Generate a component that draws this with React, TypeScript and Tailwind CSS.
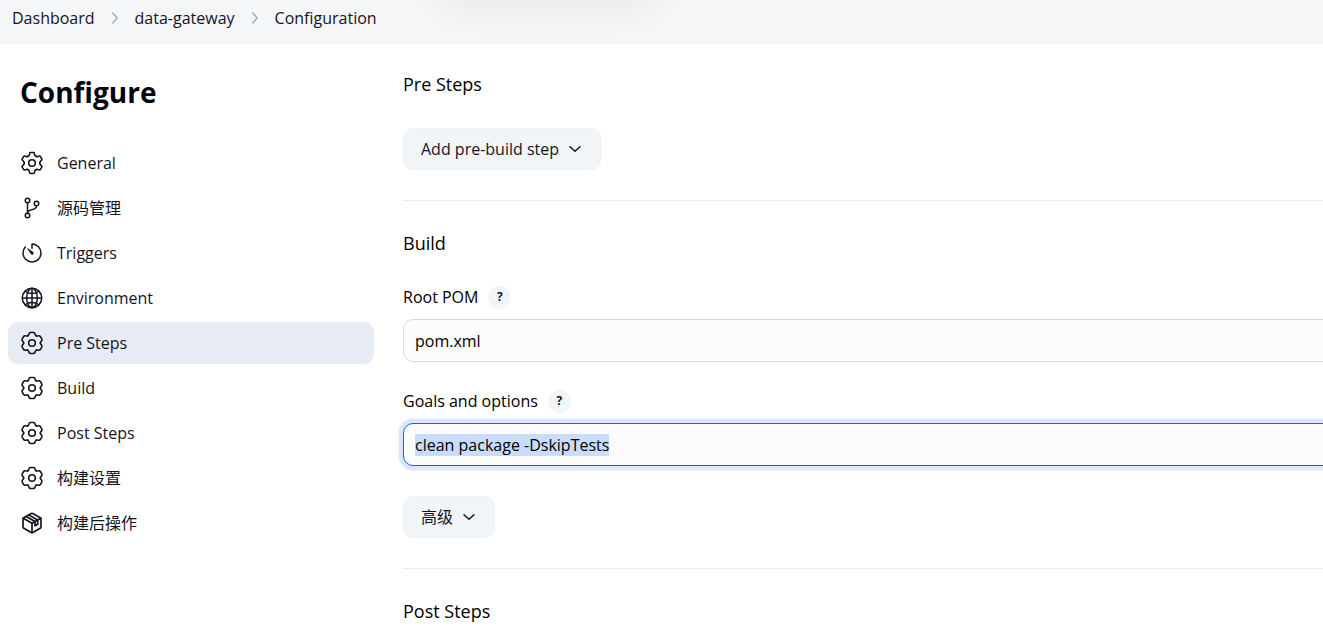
import React, { useEffect, useRef } from 'react';
import { IoGitBranchOutline, IoGlobeOutline, IoTimerOutline } from 'react-icons/io5';

const PackageIcon = () => (
  <svg
    viewBox="0 0 512 512"
    fill="none"
    stroke="currentColor"
    strokeWidth="36"
    strokeLinecap="round"
    strokeLinejoin="round"
    className="size-6"
    aria-hidden="true"
  >
    <path d="M448 341V171a32 32 0 0 0-17-28L273 53a36 36 0 0 0-34 0L81 143a32 32 0 0 0-17 28v170a32 32 0 0 0 17 28l158 90a36 36 0 0 0 34 0l158-90a32 32 0 0 0 17-28z" />
    <path d="M69 153l187 110 187-110M256 463V263" />
    <path d="M128 116l192 110v90l58-34v-90L186 84" />
  </svg>
);

const WIDE_TOOTH = 'M7.85 4.81C8.5 4.4 8.7 3.8 8.9 3Q9.2 1.6 10.5 1.5H13.5Q14.8 1.6 15.1 3C15.3 3.8 15.5 4.4 16.15 4.81';
const NARROW_TOOTH =
  'M8.1 5.25C8.9 4.9 9.3 4.4 9.4 3.6L9.6 2.3Q9.8 1.5 10.6 1.5H13.4Q14.2 1.5 14.4 2.3L14.6 3.6C14.7 4.4 15.1 4.9 15.9 5.25';

// One tooth, repeated around the centre
const GearIcon = ({ tooth = WIDE_TOOTH }: { tooth?: string }) => (
  <svg
    viewBox="0 0 24 24"
    fill="none"
    stroke="currentColor"
    strokeWidth="1.6"
    strokeLinecap="round"
    strokeLinejoin="round"
    className="size-6"
    aria-hidden="true"
  >
    {[0, 60, 120, 180, 240, 300].map((angle) => (
      <path key={angle} transform={`rotate(${angle} 12 12)`} d={tooth} />
    ))}
    <circle cx="12" cy="12" r="3.3" />
  </svg>
);

const Chevron = ({ className }: { className: string }) => (
  <svg
    viewBox="0 0 512 512"
    fill="none"
    stroke="currentColor"
    strokeWidth="48"
    strokeLinecap="round"
    strokeLinejoin="round"
    className={className}
    aria-hidden="true"
  >
    <path d="M96 184l160 144 160-144" />
  </svg>
);

const menuItems = [
  { label: 'General', icon: <GearIcon tooth={NARROW_TOOTH} /> },
  { label: '源码管理', icon: <IoGitBranchOutline className="size-6" /> },
  { label: 'Triggers', icon: <IoTimerOutline className="size-6" /> },
  { label: 'Environment', icon: <IoGlobeOutline className="size-6" /> },
  { label: 'Pre Steps', icon: <GearIcon />, active: true },
  { label: 'Build', icon: <GearIcon /> },
  { label: 'Post Steps', icon: <GearIcon /> },
  { label: '构建设置', icon: <GearIcon /> },
  { label: '构建后操作', icon: <PackageIcon /> },
];

const crumbs = ['Dashboard', 'data-gateway', 'Configuration'];

const MenuButton = ({ label }: { label: string }) => (
  <button
    type="button"
    className="flex h-[42px] items-center gap-2 rounded-[10px] border border-[#edf1f6] bg-[#f2f5f8] px-[17px] text-[#14141f] hover:bg-[#e7ebf3]"
  >
    {label}
    <Chevron className="size-4" />
  </button>
);

const FieldLabel = ({ id, label }: { id: string; label: string }) => (
  <div className="flex h-6 items-center gap-[10px]">
    <label htmlFor={id}>{label}</label>
    <button
      type="button"
      aria-label={`Help for feature: ${label}`}
      className="size-[23px] rounded-full bg-[#f2f5f8] text-xs font-bold text-[#14141f]"
    >
      ?
    </button>
  </div>
);

export default function App() {
  const goalsRef = useRef<HTMLInputElement>(null);

  useEffect(() => {
    goalsRef.current?.focus({ preventScroll: true });
    goalsRef.current?.select();
  }, []);

  return (
    <div className="overflow-clip bg-white font-['Segoe_UI','Open_Sans','Noto_Sans_CJK_SC',sans-serif] text-base text-[#14141f]">
      <header className="relative h-11 overflow-clip bg-[#f5f6f8] px-3 pt-1.5">
        <div className="absolute -top-10 left-[448px] h-8 w-[200px] rounded-full shadow-[0_4px_40px_8px_rgba(0,0,0,0.07)]" />
        <nav aria-label="Breadcrumb">
          <ol className="flex items-center gap-3">
            {crumbs.map((crumb, index) => (
              <li key={crumb} className="flex items-center gap-3">
                {index > 0 && <Chevron className="size-4 -rotate-90 text-[#98b0d4]" />}
                <a href="#">{crumb}</a>
              </li>
            ))}
          </ol>
        </nav>
      </header>

      <div className="flex">
        <aside className="w-[374px] shrink-0 pt-7 pl-2">
          <h1 className="px-3 text-[28px] leading-10 font-bold text-[#04040c]">Configure</h1>
          <nav aria-label="Sections" className="mt-[30px] flex flex-col gap-[3px]">
            {menuItems.map((item) => (
              <a
                key={item.label}
                href="#"
                aria-current={item.active ? 'true' : undefined}
                className={`flex h-[42px] items-center gap-[13px] rounded-[10px] px-3 ${
                  item.active ? 'bg-[#e7ebf3]' : 'hover:bg-[#f2f5f8]'
                }`}
              >
                {item.icon}
                {item.label}
              </a>
            ))}
          </nav>
        </aside>

        <main className="-mr-8 ml-[29px] min-w-0 flex-1 pt-7 text-black">
          <section className="border-b border-[#e9ebf1] pb-[30px]">
            <h2 className="mb-8 text-lg leading-6">Pre Steps</h2>
            <MenuButton label="Add pre-build step" />
          </section>

          <section className="border-b border-[#e9ebf1] pt-[30px] pb-[30px]">
            <h2 className="mb-[30px] text-lg leading-6">Build</h2>
            <FieldLabel id="root-pom" label="Root POM" />
            <input
              id="root-pom"
              type="text"
              defaultValue="pom.xml"
              className="mt-[10px] mb-[27px] h-[43px] w-full rounded-[10px] border border-[#d5dce8] bg-[#fcfcfd] px-[11px] outline-none"
            />
            <FieldLabel id="goals" label="Goals and options" />
            <input
              id="goals"
              ref={goalsRef}
              type="text"
              defaultValue="clean package -DskipTests"
              className="mt-[10px] mb-[30px] h-[43px] w-full rounded-[10px] border border-[#d5dce8] bg-[#fcfcfd] px-[11px] outline-none selection:bg-[#c8ddfb] selection:text-black focus:border-[#0b6adb] focus:shadow-[0_0_0_4px_#d9e7fd,0_0_0_5px_#edf4fe]"
            />
            <MenuButton label="高级" />
          </section>

          <section className="pt-[30px]">
            <h2 className="text-lg leading-6">Post Steps</h2>
          </section>
        </main>
      </div>
    </div>
  );
}
